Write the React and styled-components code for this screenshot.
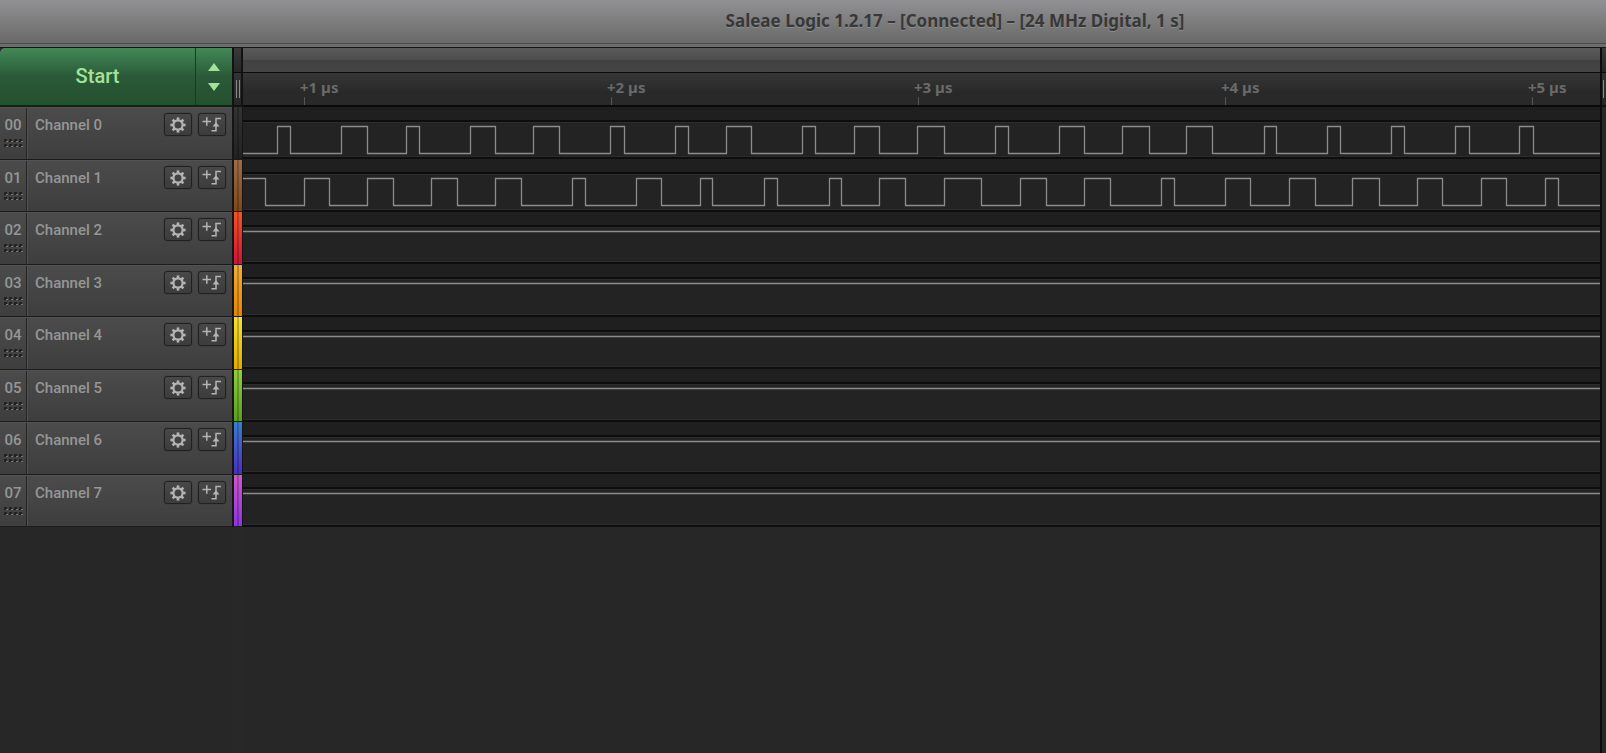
import React from "react";
import styled, { createGlobalStyle } from "styled-components";

const Global = createGlobalStyle`
  *, *::before, *::after { box-sizing: border-box; }
  body { margin: 0; background: #272727; font-family: Roboto, "Liberation Sans", sans-serif; }
`;

const Window = styled.div`
  min-height: 100vh;
  display: flex;
  flex-direction: column;
  background: #272727;
`;

const TitleBar = styled.header`
  height: 48px;
  padding: 0 0 6px 304px;
  display: flex;
  align-items: center;
  justify-content: center;
  background: linear-gradient(#919194, #6a6a6a 42px);
  border-bottom: 1px solid #151515;
  box-shadow: inset 0 -3px 0 #6d6d6d, inset 0 -4px 0 #4a4a4a;
`;

const Title = styled.h1`
  margin: 0;
  font: 700 17px/24px "Noto Sans", sans-serif;
  color: #383838;
  text-shadow: 0 1px 0 #8c8c8c;
  white-space: nowrap;
`;

const Workspace = styled.main`
  flex: 1;
  display: grid;
  grid-template-columns: 232px 11px minmax(0, 1fr) 6px;
`;

const Sidebar = styled.aside`
  display: flex;
  flex-direction: column;
`;

const StartGroup = styled.div`
  height: 59px;
  display: flex;
  border-bottom: 2px solid #1c1c1c;
`;

const greenFace = `
  border: 0;
  background: linear-gradient(#428956, #2a5a38 50%, #24502f);
  color: #a4e29a;
  cursor: pointer;
`;

const StartButton = styled.button`
  ${greenFace}
  flex: 1;
  padding: 0 0 2px;
  border-top-left-radius: 5px;
  font: 500 20px/24px Roboto, sans-serif;
`;

const StepButton = styled.button`
  ${greenFace}
  width: 37px;
  padding: 0;
  border-left: 1px solid #1b3a24;
  display: flex;
  align-items: center;
  justify-content: center;
`;

const Channels = styled.ul`
  list-style: none;
  margin: 0;
  padding: 0;
`;

const ChannelRow = styled.li`
  height: 52px;
  display: flex;
  background: linear-gradient(#4b4b4b, #3e3e3e);
  border-top: 1px solid #525252;
  border-bottom: 1px solid #1c1c1c;
  &:nth-child(odd) { height: 53px; }
`;

const Handle = styled.div`
  width: 27px;
  padding: 5px 0 0;
  display: flex;
  flex-direction: column;
  align-items: center;
  gap: 2px;
  border-right: 1px solid #252525;
  font: 500 15px/24px Roboto, sans-serif;
  color: #969696;
`;

const ChannelBody = styled.div`
  flex: 1;
  padding: 5px 6px 0 7px;
  display: flex;
  align-items: flex-start;
  gap: 6px;
  border-left: 1px solid #505050;
`;

const ChannelName = styled.span`
  flex: 1;
  font: 500 15px/24px Roboto, sans-serif;
  color: #969696;
`;

const ToolButton = styled.button`
  width: 28px;
  height: 23px;
  padding: 0;
  display: flex;
  align-items: center;
  justify-content: center;
  border: 1px solid #212121;
  border-radius: 3px;
  background: linear-gradient(#484848, #3c3c3c);
  box-shadow: 0 0 1px #1c1c1c;
  color: #b4b4b4;
  cursor: pointer;
`;

const Rail = styled.div`
  background: #282828;
  border-left: ${p => (p.$edge ? 2 : 0)}px solid #0c0c0c;
`;

const RailHead = styled.div`
  height: 59px;
  padding: 32px 0 0 ${p => (p.$edge ? 1 : 2)}px;
  overflow: hidden;
  border: solid #121212;
  border-width: 0 ${p => (p.$edge ? "0 2px 0" : "2px 2px 2px")};
  background: linear-gradient(#3a3a3a, #262626 24px, #0c0c0c 24px, #0c0c0c 25px, #333 25px, #262626);
`;

const Swatch = styled.div`
  height: 52px;
  border-left: 2px solid #151515;
  border-right: 1px solid #151515;
  border-bottom: 1px solid #1c1c1c;
  background:
    linear-gradient(90deg, transparent 3px, rgba(0, 0, 0, 0.22) 3px, rgba(0, 0, 0, 0.22) 5px, transparent 5px),
    linear-gradient(${p => p.$from}, ${p => p.$to});
  &:nth-child(even) { height: 53px; }
`;

const Plot = styled.section`
  display: flex;
  flex-direction: column;
`;

const Scroll = styled.div`
  height: 25px;
  background: linear-gradient(#5a5a5a, #4d4d4d 50%, #414141 50%, #444);
  border-bottom: 1px solid #0c0c0c;
`;

const Ruler = styled.div`
  height: 34px;
  background: linear-gradient(#363636, #292929 60%);
  border-bottom: 2px solid #0a0a0a;
  overflow: hidden;
`;

const RulerMarks = styled.ol`
  list-style: none;
  display: flex;
  margin: 0;
  padding: 4px 0 0 57px;
`;

const Mark = styled.li`
  flex: 0 0 307px;
  font: 700 15px/20px "Noto Sans", sans-serif;
  color: #6a6a6a;
  &::after {
    content: "";
    display: block;
    width: 1px;
    height: 9px;
    margin-left: 4px;
    background: #555;
  }
`;

const Lane = styled.div`
  height: 52px;
  background: linear-gradient(#1f1f1f 13px, #0d0d0d 13px, #0d0d0d 15px, #2c2c2c 15px, #2c2c2c 16px, #232323 16px);
  border-bottom: 2px solid #0e0e0e;
  box-shadow: inset 0 -1px 0 #2c2c2c;
  &:nth-child(even) { height: 53px; }
`;

const Trace = styled.svg`
  display: block;
  width: 100%;
  height: 50px;
`;

const CHANNELS = [
  { from: "#333", to: "#222", high: false, edges: [277, 290, 341, 367, 406, 419, 470, 495, 533, 559, 610, 624, 675, 688, 726, 751, 802, 815, 854, 879, 917, 944, 995, 1008, 1059, 1084, 1122, 1149, 1186, 1212, 1264, 1276, 1327, 1340, 1391, 1404, 1455, 1469, 1519, 1533] },
  { from: "#a06c47", to: "#7f4818", high: true, edges: [265, 304, 329, 367, 393, 431, 457, 495, 521, 572, 585, 636, 661, 700, 712, 764, 777, 829, 841, 879, 905, 944, 981, 1020, 1046, 1084, 1110, 1161, 1174, 1225, 1250, 1289, 1315, 1352, 1379, 1417, 1442, 1481, 1506, 1545, 1558] },
  { from: "#f35425", to: "#d01435", high: true, edges: [] },
  { from: "#f2ad3a", to: "#e58500", high: true, edges: [] },
  { from: "#f5e135", to: "#e0ac00", high: true, edges: [] },
  { from: "#90cf40", to: "#58a01e", high: true, edges: [] },
  { from: "#3a7fd0", to: "#4a2fc0", high: true, edges: [] },
  { from: "#cf58cc", to: "#8c35e0", high: true, edges: [] },
];

const PLOT_START = 243;
const HIGH_Y = 19;
const LOW_Y = 46;

function tracePath({ high, edges }) {
  let level = high;
  let d = `M-2 ${level ? HIGH_Y : LOW_Y}`;
  edges.forEach(x => {
    level = !level;
    d += `H${x - PLOT_START}V${level ? HIGH_Y : LOW_Y}`;
  });
  return d + "H8000";
}

const Gear = () => (
  <svg width="16" height="16" viewBox="0 0 16 16" fill="none" stroke="currentColor" aria-hidden="true">
    <circle cx="8" cy="8" r="4.6" strokeWidth="2.2" />
    {[0, 45, 90, 135, 180, 225, 270, 315].map(a => (
      <path key={a} d="M8 .4V3.2" strokeWidth="2.6" transform={`rotate(${a} 8 8)`} />
    ))}
  </svg>
);

const Trigger = () => (
  <svg width="20" height="17" viewBox="0 0 20 17" fill="none" stroke="currentColor" strokeWidth="1.5" aria-hidden="true">
    <path d="M.5 5.5H9M4.8 1.2V9.8M9.5 14.8H14V2.5H19" />
    <path d="M14 6.2L17.5 10.5H10.5Z" fill="currentColor" stroke="none" />
  </svg>
);

const Dots = () => (
  <svg width="19" height="9" viewBox="0 0 19 9" aria-hidden="true">
    {[0, 5].map(y => [0, 5, 10, 15].map(x => (
      <g key={`${x}-${y}`}>
        <rect x={x} y={y} width="3" height="3" fill="#222" />
        <rect x={x + 2} y={y + 2} width="2" height="1" fill="#777" />
      </g>
    )))}
  </svg>
);

const Grip = () => (
  <svg width="5" height="18" viewBox="0 0 5 18" aria-hidden="true">
    <path d="M.5 0V18M3.5 0V18" stroke="#8a8a8a" />
  </svg>
);

export default function App() {
  return (
    <Window>
      <Global />
      <TitleBar>
        <Title>Saleae Logic 1.2.17 – [Connected] – [24 MHz Digital, 1 s]</Title>
      </TitleBar>
      <Workspace>
        <Sidebar>
          <StartGroup>
            <StartButton type="button">Start</StartButton>
            <StepButton type="button" aria-label="Capture settings">
              <svg width="12" height="28" viewBox="0 0 12 28" fill="currentColor" aria-hidden="true">
                <path d="M6 0L12 8H0ZM0 20H12L6 28Z" />
              </svg>
            </StepButton>
          </StartGroup>
          <Channels>
            {CHANNELS.map((_, i) => (
              <ChannelRow key={i}>
                <Handle>0{i}<Dots /></Handle>
                <ChannelBody>
                  <ChannelName>Channel {i}</ChannelName>
                  <ToolButton type="button" aria-label={`Channel ${i} settings`}><Gear /></ToolButton>
                  <ToolButton type="button" aria-label={`Channel ${i} trigger`}><Trigger /></ToolButton>
                </ChannelBody>
              </ChannelRow>
            ))}
          </Channels>
        </Sidebar>
        <Rail>
          <RailHead><Grip /></RailHead>
          {CHANNELS.map((c, i) => <Swatch key={i} $from={c.from} $to={c.to} />)}
        </Rail>
        <Plot>
          <Scroll />
          <Ruler>
            <RulerMarks>
              {[1, 2, 3, 4, 5].map(n => <Mark key={n}>+{n} µs</Mark>)}
            </RulerMarks>
          </Ruler>
          <div>
            {CHANNELS.map((c, i) => (
              <Lane key={i}>
                <Trace role="img" aria-label={`Channel ${i} signal`}>
                  <path d={tracePath(c)} transform="translate(.5 .5)" fill="none" stroke="#8c8c8c" strokeWidth="1.3" />
                </Trace>
              </Lane>
            ))}
          </div>
        </Plot>
        <Rail $edge>
          <RailHead $edge><Grip /></RailHead>
        </Rail>
      </Workspace>
    </Window>
  );
}
